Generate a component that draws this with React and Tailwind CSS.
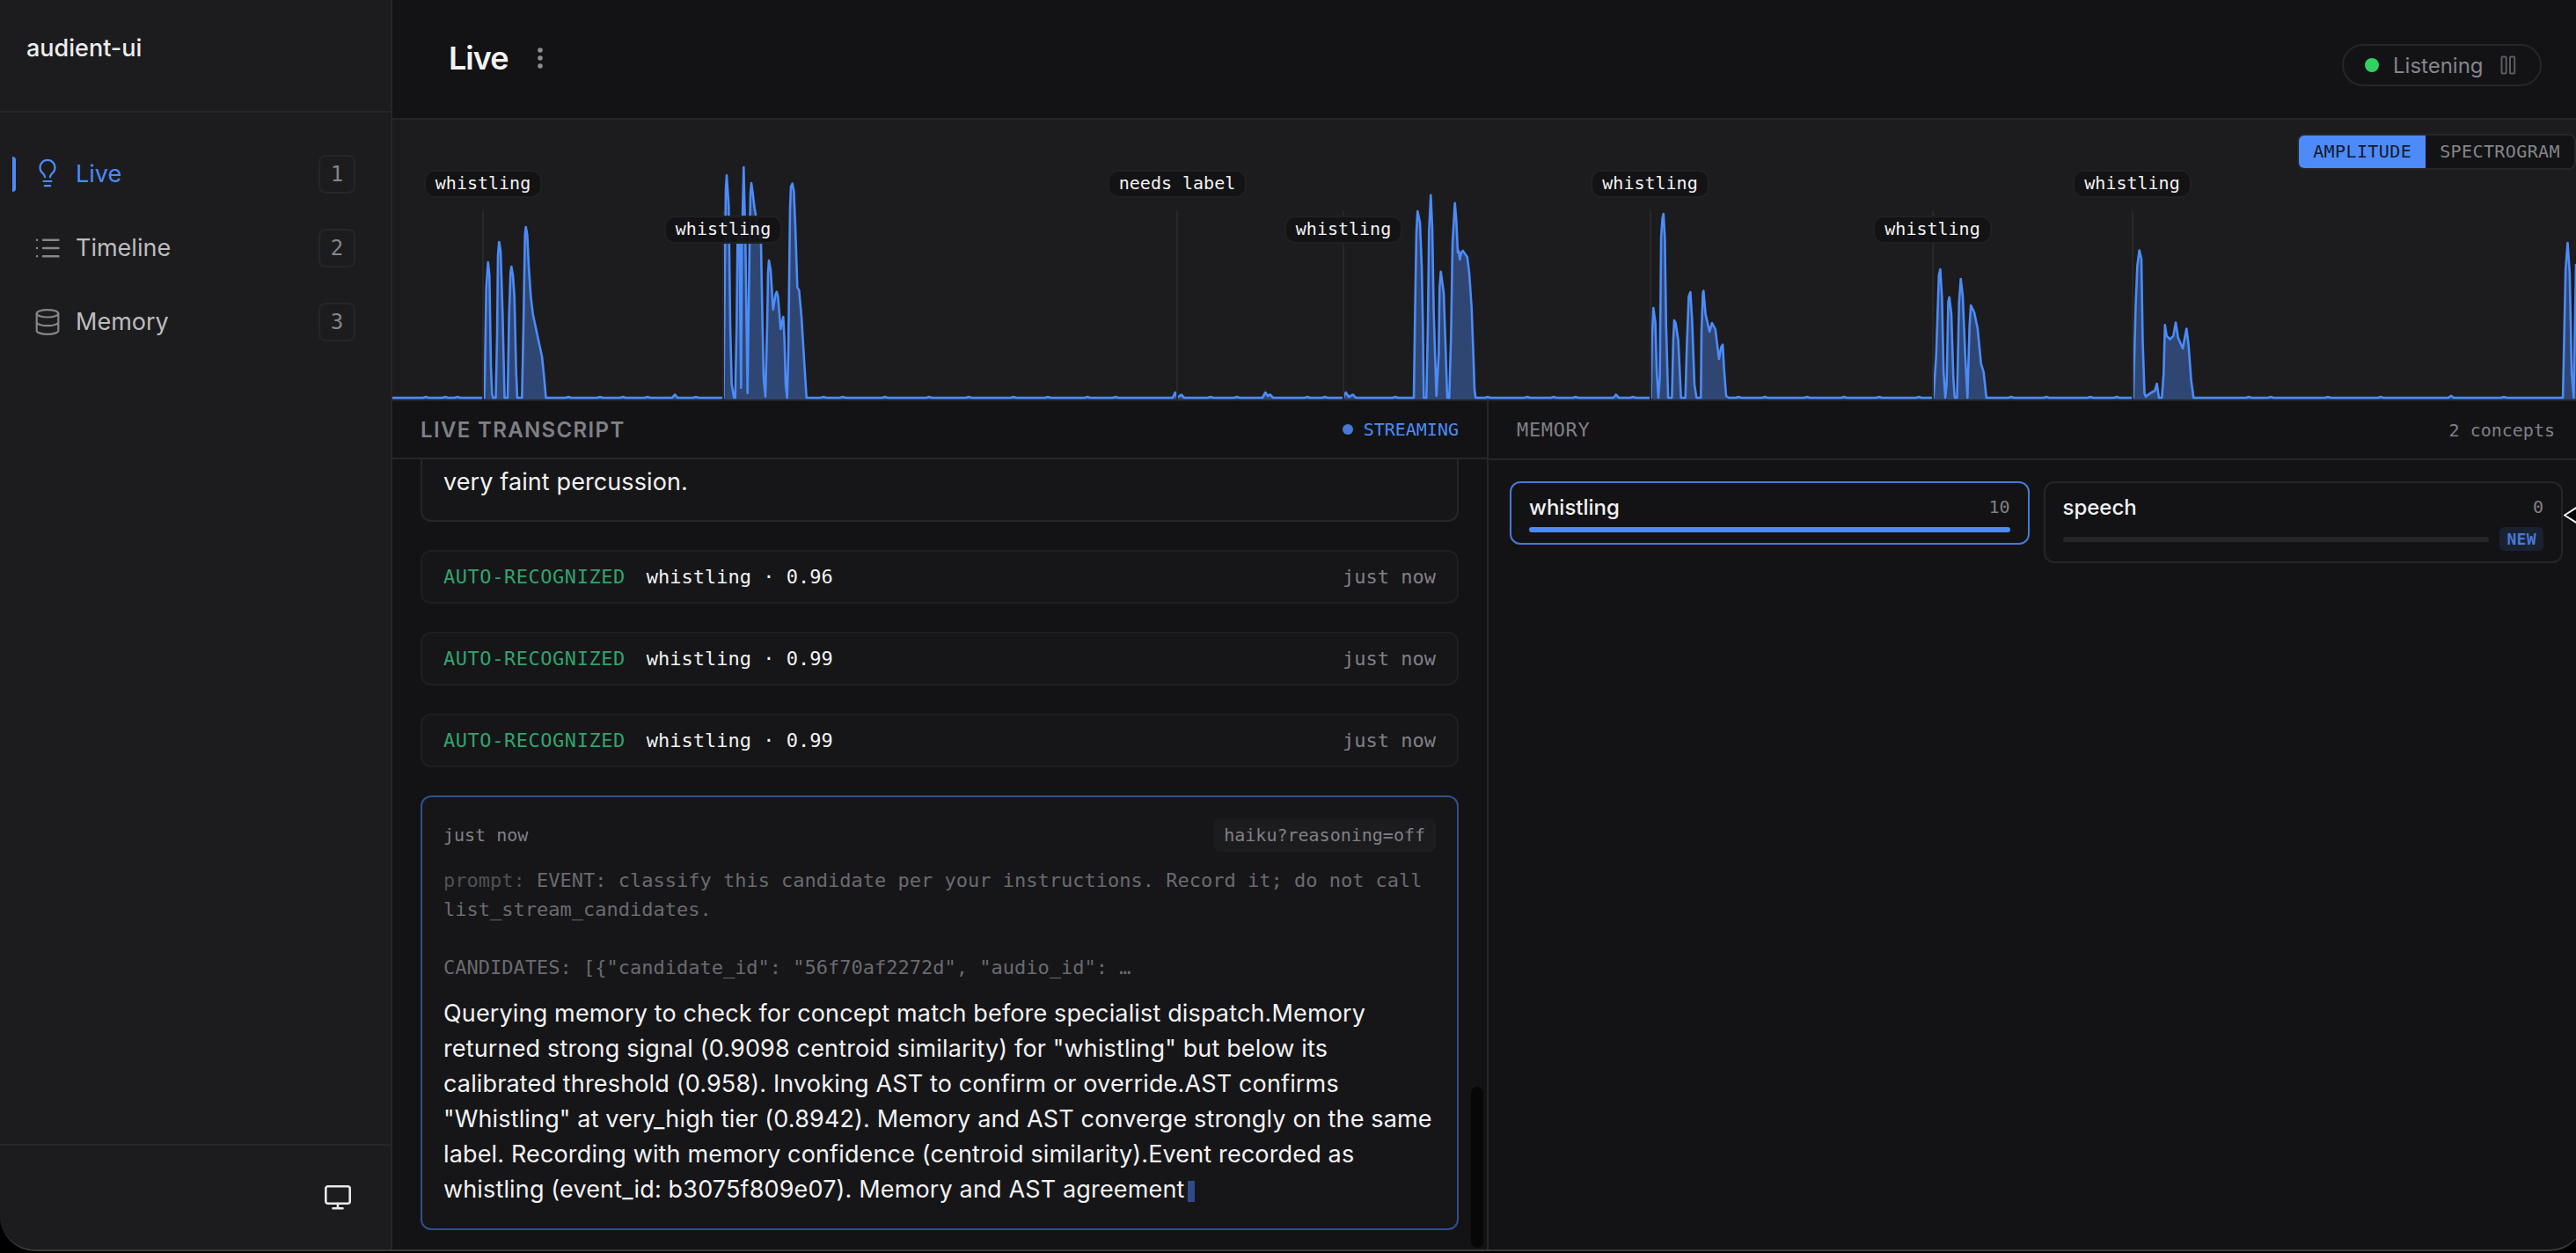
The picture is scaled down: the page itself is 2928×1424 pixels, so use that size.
import { clsx } from 'clsx';

const mono = "font-['DejaVu_Sans_Mono',monospace]";

// Amplitude bursts as [x, y] pairs in canvas coordinates, the floor is y = 316
const FLOOR = 316;
const bursts = [
  [[104.5, 316], [105.3, 281], [106.7, 191], [108.7, 162], [110.3, 177], [112, 281], [113.3, 312], [114.5, 316]],
  [[117.5, 316], [119, 247], [120, 154], [121.3, 139], [123, 149], [125.3, 221], [127.5, 316]],
  [[131, 316], [132.7, 221], [134.3, 174], [135.3, 167], [137, 177], [138.7, 201], [140.7, 287], [142, 316]],
  [[147.3, 316], [149, 234], [150.7, 131], [151.7, 122], [153.3, 131], [155, 167], [157.3, 201], [159.7, 221], [165, 246], [170, 269], [172.3, 291], [174.5, 316]],
  [[318, 316], [321.3, 312.5], [324, 316]],
  [[376.5, 316], [378, 164], [379, 79], [380, 63.3], [382.3, 98], [384, 234], [385.7, 301], [388.3, 316]],
  [[389.7, 316], [391.3, 234], [392.3, 141], [393.5, 126], [394.6, 141], [396.3, 304.7], [397.3, 141], [399.3, 54], [401.3, 141], [403.7, 310.7], [406, 141], [407, 84], [408, 72], [410, 87], [411.7, 101], [419, 141], [420.7, 234], [422, 294], [424, 314.7], [426, 234], [427, 174], [428, 160], [430, 171], [432.7, 215.7], [435.7, 198], [437, 195.7], [438.3, 201], [441.3, 238], [444.3, 224], [445.7, 251], [447, 301], [448.7, 316], [450, 267], [452, 101], [453, 76], [454.7, 72.7], [456.3, 81], [458, 121], [460.3, 190.7], [462.3, 194], [465, 224], [468.7, 284], [470.7, 316]],
  [[887, 316], [889.7, 310], [892, 316], [896.7, 312.5], [900, 316]],
  [[989, 316], [992.3, 310], [995, 314], [997.7, 312.5], [1001, 316]],
  [[1081, 316], [1083.7, 310], [1087, 315], [1092, 312.5], [1095, 316]],
  [[1161, 316], [1162.7, 201], [1164, 127], [1165.3, 104], [1168, 117], [1170, 167], [1171.3, 234], [1172.3, 316]],
  [[1175.3, 316], [1177, 234], [1178.3, 127], [1180.3, 85.7], [1182, 124], [1183.7, 221], [1186.7, 314], [1189.3, 267], [1190.3, 191], [1191.7, 172.7], [1195, 197], [1196.7, 247], [1199, 316]],
  [[1201.3, 316], [1203.3, 247], [1205, 141], [1207.7, 94.7], [1209.3, 114], [1211, 151], [1212, 149], [1213.3, 159], [1215, 151], [1216.7, 149], [1221.7, 156], [1224, 174], [1226.7, 214], [1228.7, 267], [1230, 307], [1231.3, 316]],
  [[1388, 316], [1390.8, 312.5], [1394, 316]],
  [[1430.6, 316], [1431.8, 247], [1433.3, 214], [1435.6, 231], [1437.1, 287], [1439, 316], [1440.6, 294], [1442.1, 134], [1443.6, 112], [1444.8, 107], [1446.3, 134], [1447.8, 234], [1450.1, 316]],
  [[1454.4, 316], [1455.9, 251], [1457, 228], [1458.6, 231], [1461.6, 251], [1464.7, 316]],
  [[1469.7, 316], [1471.2, 261], [1473.5, 201], [1475.4, 196], [1477.3, 227], [1480, 301], [1482.3, 316]],
  [[1487.3, 316], [1488, 241], [1489.6, 197], [1490.3, 194.5], [1492.6, 221], [1497.2, 241], [1499.9, 231], [1503.7, 238], [1507.9, 272], [1510.2, 259], [1512.1, 255.7], [1513.7, 284], [1516, 314], [1519, 316]],
  [[1751.7, 316], [1754.8, 267], [1757.8, 177], [1759.4, 170], [1761.3, 201], [1763.2, 287], [1765.1, 316], [1766.6, 301], [1768.5, 207], [1769.7, 201.7], [1772, 221], [1774.3, 294], [1775.8, 316]],
  [[1778.5, 316], [1780.8, 207], [1782.7, 181], [1785, 201], [1787.7, 267], [1790.3, 316], [1792.7, 234], [1794.2, 211], [1798, 219], [1801.8, 237], [1805.7, 277], [1808.7, 287], [1811.8, 316]],
  [[1978.8, 316], [1981.5, 211], [1983.4, 166], [1985.7, 148.5], [1988, 158], [1989.5, 252], [1991.5, 311], [1993, 314.6], [1998.7, 310.5], [2003.3, 308], [2005.6, 300], [2007.9, 316]],
  [[2011.3, 316], [2013.3, 288.5], [2014.8, 233.4], [2016.7, 245.6], [2020.5, 249.7], [2024.4, 245.6], [2027, 230.5], [2029.7, 247.7], [2035, 260], [2039.3, 237.5], [2041.6, 256], [2044.6, 296.6], [2047.3, 316]],
  [[2337, 316], [2340, 313.8], [2343, 316]],
  [[2467.1, 316], [2470.2, 170], [2472.5, 140], [2474.8, 174], [2477.1, 288], [2479.4, 316], [2482, 164]],
];

const ripples = [38, 60, 74, 200, 236, 262, 290, 345, 490, 512, 560, 610, 655, 706, 745, 790, 822, 930, 960, 1040, 1060, 1140, 1245, 1290, 1320, 1345, 1410, 1530, 1560, 1608, 1650, 1690, 1735, 1840, 1880, 1930, 1960, 2110, 2135, 2200, 2260, 2400];

const wavePoints = [
  [0, FLOOR],
  ...[...bursts, ...ripples.map((x) => [[x - 3, FLOOR], [x, FLOOR - 1], [x + 3, FLOOR]])]
    .sort((a, b) => a[0][0] - b[0][0])
    .flat(),
];

const line = wavePoints.map((p, i) => `${i ? 'L' : 'M'}${p[0]} ${p[1]}`).join('');

const markers = [
  { x: 103, label: 'whistling' },
  { x: 376, label: 'whistling', low: true },
  { x: 892, label: 'needs label' },
  { x: 1081, label: 'whistling', low: true },
  { x: 1429.5, label: 'whistling' },
  { x: 1750.5, label: 'whistling', low: true },
  { x: 1977.5, label: 'whistling' },
];

function BulbIcon() {
  return (
    <svg width="32" height="36" viewBox="0 0 32 36" fill="none" stroke="currentColor" strokeWidth="2.2" strokeLinecap="round">
      <path d="M13 20.500c0-1.600-.8-2.700-1.900-4a8.500 8.500 0 1 1 9.800 0c-1.100 1.300-1.900 2.400-1.900 4" transform="translate(0 .8)" />
      <path d="M11.500 26h9M12.800 31.200h6.400" />
    </svg>
  );
}

function ListIcon() {
  return (
    <svg width="32" height="36" viewBox="0 0 32 36" fill="none" stroke="currentColor" strokeWidth="2.4" strokeLinecap="round">
      <path d="M11 8.700h17.500M11 18h17.500M11 27.300h17.500M4 8.700h.1M4 18h.1M4 27.300h.1" />
    </svg>
  );
}

function DatabaseIcon() {
  return (
    <svg width="32" height="36" viewBox="0 0 32 36" fill="none" stroke="currentColor" strokeWidth="2.2">
      <ellipse cx="16" cy="8.300" rx="12.300" ry="4.200" />
      <path d="M3.700 8.300v19.400c0 2.300 5.500 4.200 12.300 4.200s12.300-1.900 12.300-4.200V8.300M3.700 18c0 2.300 5.500 4.200 12.300 4.200s12.300-1.900 12.300-4.200" />
    </svg>
  );
}

const navItems = [
  { name: 'Live', icon: BulbIcon, active: true },
  { name: 'Timeline', icon: ListIcon },
  { name: 'Memory', icon: DatabaseIcon },
];

function Sidebar() {
  return (
    <aside className="flex w-[446px] shrink-0 flex-col border-r-2 border-[#262628] bg-[#1c1c1e]">
      <div className="h-[128px] border-b-2 border-[#262628] pt-[37px] pl-[30px] text-[27px] leading-[36px] font-medium text-[#ececee]">
        audient-ui
      </div>
      <nav className="flex flex-1 flex-col gap-3 pt-[34px] pr-10 pl-3.5">
        {navItems.map(({ name, icon: Icon, active }, i) => (
          <div key={name} className="flex h-[72px] items-center">
            <span className={clsx('h-10 w-1 rounded-r', active && 'bg-[#4c8bf9]')} />
            <span className={clsx('ml-5 flex', active ? 'text-[#4c8bf9]' : 'text-[#85858c]')}>
              <Icon />
            </span>
            <span className={clsx('ml-4 flex-1 pt-px text-[27px]', active ? 'text-[#4c8bf9]' : 'text-[#bcbcbe]')}>{name}</span>
            <span className={clsx(mono, 'flex h-11 w-[42px] items-center justify-center rounded-lg border-2 border-[#262628] text-[24px] text-[#85858c]')}>
              {i + 1}
            </span>
          </div>
        ))}
      </nav>
      <div className="flex h-[120px] items-center justify-end border-t-2 border-[#262628] pr-11">
        <svg width="32" height="32" viewBox="0 0 32 32" fill="none" stroke="#e8e8ea" strokeWidth="2.6" strokeLinecap="round">
          <rect x="2.300" y="3.300" width="27.400" height="19.400" rx="2.500" />
          <path d="M16 23v5M10.500 28.300h11" />
        </svg>
      </div>
    </aside>
  );
}

function Header() {
  return (
    <header className="flex h-[136px] items-center justify-between border-b-2 border-[#262628] pr-[39px] pl-16">
      <div className="-mt-0.5 flex items-center gap-[33px]">
        <h1 className="text-[36px] font-semibold tracking-[-1px] text-[#f2f2f3]">Live</h1>
        <svg width="6" height="26" viewBox="0 0 6 26" fill="#8c8c93">
          <circle cx="3" cy="4" r="2.800" />
          <circle cx="3" cy="13" r="2.800" />
          <circle cx="3" cy="22" r="2.800" />
        </svg>
      </div>
      <div className="mt-3.5 flex h-12 w-[227px] items-center rounded-full border-2 border-[#262628] pl-6">
        <span className="size-4 rounded-full bg-[#32d060]" />
        <span className="ml-4 pt-px text-[24px] text-[#85858c]">Listening</span>
        <svg className="mr-[27px] ml-auto" width="18" height="22" viewBox="0 0 18 22" fill="none" stroke="#5c5c63" strokeWidth="2">
          <rect x="1.500" y="1.500" width="5.200" height="19" rx="1" />
          <rect x="11" y="1.500" width="5.200" height="19" rx="1" />
        </svg>
      </div>
    </header>
  );
}

function Waveform() {
  return (
    <section className="relative h-[320px] shrink-0 overflow-hidden border-b-2 border-[#20242e] bg-[#1c1c1e]">
      <svg width="2482" height="318" viewBox="0 0 2482 318">
        <path d={`${line}V318H0Z`} fill="#4c8bf9" fillOpacity="0.38" />
        <path d={line} fill="none" stroke="#4c8bf9" strokeWidth="2.6" strokeLinejoin="round" />
      </svg>

      {markers.map(({ x, label, low }) => (
        <div key={x} className="absolute top-0 flex h-full w-0 justify-center" style={{ left: x }}>
          <span className="absolute top-[104px] bottom-0 w-0.5 bg-[#28282a]" />
          <span
            className={clsx(
              mono,
              'absolute flex h-8 items-center rounded-xl border-2 border-[#202022] bg-[#131315]/95 px-[11px] pb-0.5 text-[20px] whitespace-nowrap text-[#f2f2f3]',
              low ? 'top-[109px]' : 'top-[57px]'
            )}
          >
            {label}
          </span>
        </div>
      ))}

      <div className={clsx(mono, 'absolute top-4 right-0 flex h-[41px] overflow-hidden rounded-lg border-2 border-[#262628] bg-[#131315] text-[20px] leading-[37px] tracking-[0.4px]')}>
        <span className="bg-[#4c8bf9] px-4 text-[#131a2b]">AMPLITUDE</span>
        <span className="px-4 text-[#85858c]">SPECTROGRAM</span>
      </div>
    </section>
  );
}

function RecognizedRow({ label, score }) {
  return (
    <div className={clsx(mono, 'flex h-[61px] shrink-0 items-center rounded-xl border-2 border-[#1f1f21] bg-[#161618] px-6 text-[22px]')}>
      <span className="tracking-[0.54px] text-[#30a46c]">AUTO-RECOGNIZED</span>
      <span className="ml-6 text-[#f2f2f3]">{label} · {score}</span>
      <span className="ml-auto text-[#808087]">just now</span>
    </div>
  );
}

const promptLines = [
  'list_stream_candidates.',
  '\u00a0',
  'CANDIDATES: [{"candidate_id": "56f70af2272d", "audio_id": …',
];

const bodyLines = [
  'Querying memory to check for concept match before specialist dispatch.Memory',
  'returned strong signal (0.9098 centroid similarity) for "whistling" but below its',
  'calibrated threshold (0.958). Invoking AST to confirm or override.AST confirms',
  '"Whistling" at very_high tier (0.8942). Memory and AST converge strongly on the same',
  'label. Recording with memory confidence (centroid similarity).Event recorded as',
  'whistling (event_id: b3075f809e07). Memory and AST agreement',
];

function Transcript() {
  return (
    <section className="relative flex w-[1246px] shrink-0 flex-col border-r-2 border-[#262628]">
      <div className="flex h-[66px] shrink-0 items-center justify-between border-b-2 border-[#262628] px-8">
        <h2 className="pt-0.5 text-[24px] font-semibold tracking-[1.35px] text-[#808087]">LIVE TRANSCRIPT</h2>
        <div className={clsx(mono, 'flex items-center gap-3 text-[20px] text-[#4c8bf9]')}>
          <span className="size-3 rounded-full bg-[#4779d6]" />
          STREAMING
        </div>
      </div>

      <div className="flex min-h-0 flex-1 flex-col gap-8 overflow-hidden px-8">
        <div className="h-[71px] shrink-0 rounded-b-xl border-2 border-t-0 border-[#262628] bg-[#161618] px-6 pt-1.5 text-[27px] leading-[40px] tracking-[0.1px] text-[#f2f2f3]">
          very faint percussion.
        </div>
        <RecognizedRow label="whistling" score="0.96" />
        <RecognizedRow label="whistling" score="0.99" />
        <RecognizedRow label="whistling" score="0.99" />

        <article className="h-[494px] shrink-0 rounded-xl border-2 border-[#2f4f8c] bg-[#161618] px-6 pt-6">
          <div className={clsx(mono, 'flex h-[38px] items-center justify-between text-[20px] text-[#808087]')}>
            <span>just now</span>
            <span className="flex h-full items-center rounded-lg bg-[#1c1c1e] px-3">haiku?reasoning=off</span>
          </div>
          <div className={clsx(mono, 'mt-4 text-[22px] leading-[33px] whitespace-nowrap text-[#6a6a70]')}>
            <p>
              <span className="text-[#505056]">prompt:</span>{' '}
              <span>EVENT: classify this candidate per your instructions. Record it; do not call</span>
            </p>
            {promptLines.map((text) => (
              <p key={text}>{text}</p>
            ))}
          </div>
          <div className="mt-4 text-[27px] leading-[40px] tracking-[0.15px] whitespace-nowrap text-[#f2f2f3]">
            {bodyLines.map((text, i) => (
              <p key={text}>
                {text}
                {i === bodyLines.length - 1 && <span className="ml-1 inline-block h-6 w-2 bg-[#31488a] align-[-5px]" />}
              </p>
            ))}
          </div>
        </article>
      </div>

      <div className="absolute right-1 bottom-0.5 h-[183px] w-3.5 rounded-full bg-[#070708]" />
    </section>
  );
}

function Memory() {
  return (
    <section className="relative flex flex-1 flex-col">
      <div className={clsx(mono, 'flex h-[67px] items-center justify-between border-b-2 border-[#262628] pr-6 pl-8 text-[#808087]')}>
        <h2 className="text-[22px] tracking-[0.66px]">MEMORY</h2>
        <span className="text-[20px]">2 concepts</span>
      </div>

      <div className="grid grid-cols-2 items-start gap-4 pt-6 pr-[15px] pl-6">
        <div className="rounded-xl border-2 border-[#4779d6] px-5 pt-3 pb-3">
          <div className="flex h-[38px] items-start justify-between">
            <span className="text-[24px] leading-[32px] font-medium text-[#f2f2f3]">whistling</span>
            <span className={clsx(mono, 'text-[20px] leading-[31px] text-[#808087]')}>10</span>
          </div>
          <div className="h-1.5 rounded-full bg-[#4c8bf9]" />
        </div>
        <div className="rounded-xl border-2 border-[#262628] px-5 pt-3 pb-3">
          <div className="flex h-[38px] items-start justify-between">
            <span className="text-[24px] leading-[32px] font-medium text-[#f2f2f3]">speech</span>
            <span className={clsx(mono, 'text-[20px] leading-[31px] text-[#808087]')}>0</span>
          </div>
          <div className="flex h-[27px] items-center gap-3">
            <div className="h-1.5 flex-1 rounded-full bg-[#262628]" />
            <span className={clsx(mono, 'rounded-md bg-[#1a2231] px-2 text-[18px] leading-[27px] font-bold tracking-[0.36px] text-[#4779d6]')}>
              NEW
            </span>
          </div>
        </div>
      </div>

      {/* pointer resting on the right edge */}
      <svg className="absolute top-[118px] right-0" width="15" height="24" viewBox="0 0 15 24">
        <path d="M17 2 2 11.500 17 21" fill="#000" stroke="#f2f2f3" strokeWidth="2" strokeLinejoin="round" />
      </svg>
    </section>
  );
}

export default function App() {
  return (
    <div className="h-[1424px] w-[2928px] overflow-hidden bg-black font-['Inter',sans-serif]">
      <div className="flex h-[1422px] w-[2938px] overflow-hidden rounded-b-[40px] border-b-2 border-[#3a3a3c] bg-[#131315]">
        <Sidebar />
        <main className="flex w-[2482px] flex-col">
          <Header />
          <Waveform />
          <div className="flex min-h-0 flex-1">
            <Transcript />
            <Memory />
          </div>
        </main>
      </div>
    </div>
  );
}
